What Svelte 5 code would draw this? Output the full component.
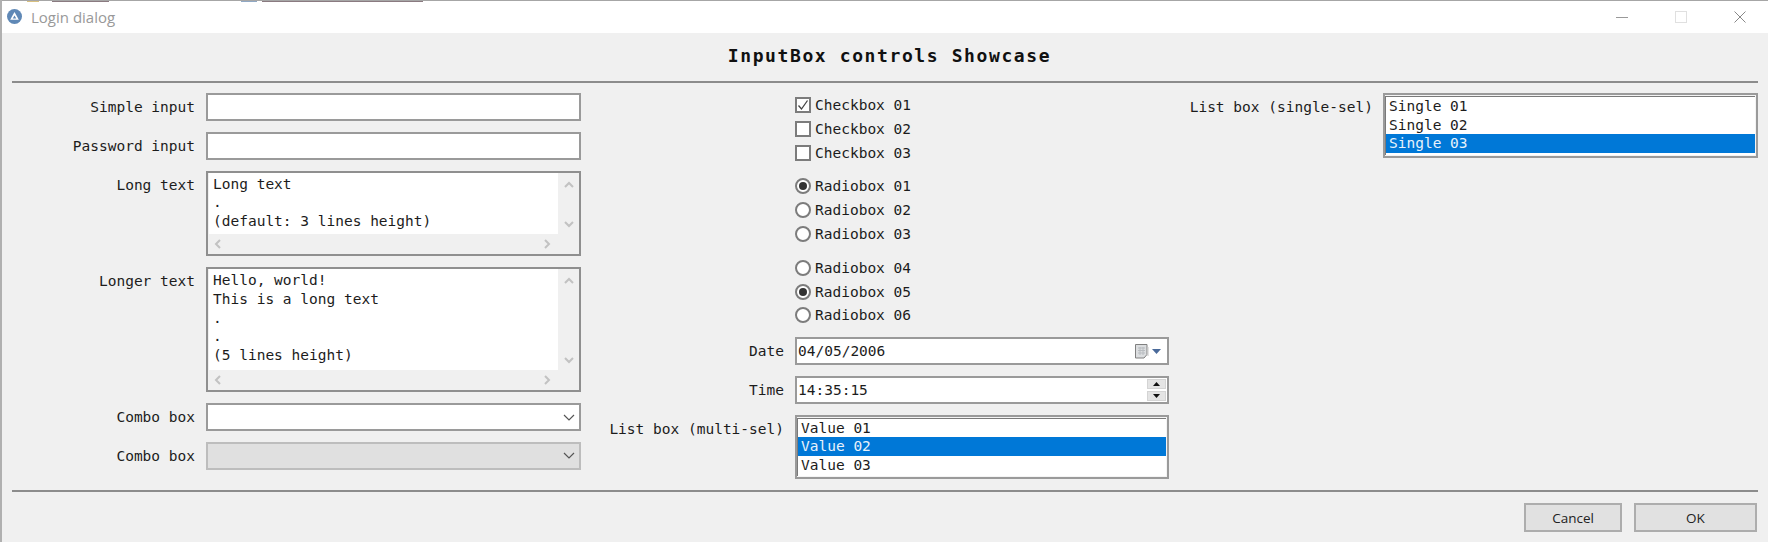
<script>
  const checks = [
    { label: 'Checkbox 01', on: true },
    { label: 'Checkbox 02', on: false },
    { label: 'Checkbox 03', on: false }
  ];
  const radioGroups = [
    [
      { label: 'Radiobox 01', on: true },
      { label: 'Radiobox 02', on: false },
      { label: 'Radiobox 03', on: false }
    ],
    [
      { label: 'Radiobox 04', on: false },
      { label: 'Radiobox 05', on: true },
      { label: 'Radiobox 06', on: false }
    ]
  ];
  const multi = ['Value 01', 'Value 02', 'Value 03'];
  const single = ['Single 01', 'Single 02', 'Single 03'];
</script>

{#snippet vscroll()}
  <div class="vbar">
    <svg width="10" height="7" viewBox="0 0 10 7"><path d="M1 6l4-4 4 4" /></svg>
    <svg width="10" height="7" viewBox="0 0 10 7"><path d="M1 1l4 4 4-4" /></svg>
  </div>
{/snippet}

{#snippet hscroll()}
  <div class="hbar">
    <svg width="7" height="10" viewBox="0 0 7 10"><path d="M6 1L2 5l4 4" /></svg>
    <svg width="7" height="10" viewBox="0 0 7 10"><path d="M1 1l4 4-4 4" /></svg>
  </div>
{/snippet}

{#snippet chevron()}
  <svg class="chev" width="12" height="7" viewBox="0 0 12 7"><path d="M1 1l5 5 5-5" /></svg>
{/snippet}

{#snippet listbox(items, selected)}
  <div class="listbox">
    <div class="listinner">
      {#each items as item, i}
        <div class="item" class:sel={i === selected}>{item}</div>
      {/each}
    </div>
  </div>
{/snippet}

<div class="window">
  <div class="strip"></div>
  <header class="titlebar">
    <svg class="appicon" width="15" height="15" viewBox="0 0 16 16">
      <circle cx="8" cy="8" r="8" fill="#5f88b6" />
      <path d="M8 3.2L12.6 11.4H3.4Z" fill="#fff" />
      <path d="M8 6.8L9.9 10H6.1Z" fill="#5f88b6" />
    </svg>
    <span class="wintitle">Login dialog</span>
    <div class="winctl">
      <svg width="12" height="12" viewBox="0 0 12 12"><path d="M0 6.5h12" stroke="#999" /></svg>
      <svg width="12" height="12" viewBox="0 0 12 12"><rect x=".5" y=".5" width="11" height="11" fill="none" stroke="#e0e0e0" /></svg>
      <svg width="12" height="12" viewBox="0 0 12 12"><path d="M.5.5l11 11M11.5.5l-11 11" stroke="#888" /></svg>
    </div>
  </header>

  <main class="body">
    <h1>InputBox controls Showcase</h1>
    <hr />

    <div class="columns">
      <div class="col first">
        <div class="row">
          <span class="lbl">Simple input</span>
          <input class="field" type="text" />
        </div>
        <div class="row">
          <span class="lbl">Password input</span>
          <input class="field" type="password" />
        </div>
        <div class="row">
          <span class="lbl">Long text</span>
          <div class="memo short">
            <div class="memotop">
              <div class="memotext">Long text<br />.<br />(default: 3 lines height)</div>
              {@render vscroll()}
            </div>
            {@render hscroll()}
          </div>
        </div>
        <div class="row">
          <span class="lbl">Longer text</span>
          <div class="memo tall">
            <div class="memotop">
              <div class="memotext">Hello, world!<br />This is a long text<br />.<br />.<br />(5 lines height)</div>
              {@render vscroll()}
            </div>
            {@render hscroll()}
          </div>
        </div>
        <div class="row">
          <span class="lbl">Combo box</span>
          <div class="field combo">{@render chevron()}</div>
        </div>
        <div class="row">
          <span class="lbl">Combo box</span>
          <div class="field combo disabled">{@render chevron()}</div>
        </div>
      </div>

      <div class="col middle">
        <div class="row opts">
          <span class="lbl"></span>
          <div class="options">
            <div class="group">
              {#each checks as c}
                <div class="opt">
                  <span class="box">
                    {#if c.on}
                      <svg width="12" height="12" viewBox="0 0 12 12"><path d="M1.5 6.5l3 3.5 6-8.5" /></svg>
                    {/if}
                  </span>
                  {c.label}
                </div>
              {/each}
            </div>
            {#each radioGroups as group}
              <div class="group">
                {#each group as r}
                  <div class="opt">
                    <span class="radio" class:on={r.on}></span>
                    {r.label}
                  </div>
                {/each}
              </div>
            {/each}
          </div>
        </div>
        <div class="row">
          <span class="lbl">Date</span>
          <div class="field valued">
            04/05/2006
            <div class="picker">
              <svg width="14" height="16" viewBox="0 0 14 16">
                <path d="M.5 1.5h11.5v10l-3 3.5H.5z" fill="#dcdee0" stroke="#808080" />
                <path d="M3 5h7M3 7.5h7M3 10h7M5 4v8M8 4v8" stroke="#b8bcc0" />
                <path d="M13 4v9" stroke="#c8c8c8" />
              </svg>
              <svg width="9" height="5" viewBox="0 0 9 5"><path d="M0 0h9L4.5 5z" fill="#4a6a9a" /></svg>
            </div>
          </div>
        </div>
        <div class="row">
          <span class="lbl">Time</span>
          <div class="field valued">
            14:35:15
            <div class="spin">
              <span class="spinbtn"><svg width="7" height="4" viewBox="0 0 7 4"><path d="M3.5 0L7 4H0z" /></svg></span>
              <span class="spinbtn"><svg width="7" height="4" viewBox="0 0 7 4"><path d="M0 0h7L3.5 4z" /></svg></span>
            </div>
          </div>
        </div>
        <div class="row">
          <span class="lbl">List box (multi-sel)</span>
          {@render listbox(multi, 1)}
        </div>
      </div>

      <div class="col last">
        <div class="row">
          <span class="lbl">List box (single-sel)</span>
          {@render listbox(single, 2)}
        </div>
      </div>
    </div>

    <hr class="bottom" />

    <footer class="actions">
      <button class="cancel">Cancel</button>
      <button class="ok">OK</button>
    </footer>
  </main>
</div>

<style>
  :global(body) {
    margin: 0;
    background: #fff;
  }

  .window {
    width: 1768px;
    height: 542px;
    box-sizing: border-box;
    border-left: 2px solid #b0b0b0;
    display: flex;
    flex-direction: column;
    overflow: hidden;
    font-family: "DejaVu Sans Mono", monospace;
    font-size: 14.5px;
    color: #1c1c1c;
  }

  /* sliver of whatever window sits behind the dialog */
  .strip {
    height: 1px;
    flex: none;
    border-top: 1px solid #a6a6a6;
    background: linear-gradient(90deg, #fff 25px, #d8c080 25px 37px, #fff 37px 50px, #8a7a80 50px 107px, #fff 107px 239px, #90a8c4 239px 255px, #fff 255px 260px, #8a7a80 260px 421px, #fff 421px);
  }

  .titlebar {
    height: 31px;
    flex: none;
    background: #fff;
    display: flex;
    align-items: center;
    padding: 0 0 2px 5px;
    box-sizing: border-box;
  }

  .appicon {
    margin-right: 9px;
  }

  .wintitle {
    font-family: "Open Sans", sans-serif;
    font-size: 15px;
    color: #999;
  }

  .winctl {
    margin-left: auto;
    display: flex;
    gap: 47px;
    padding-right: 22px;
  }

  .body {
    flex: 1;
    background: #f0f0f0;
    padding: 0 10px;
    display: flex;
    flex-direction: column;
  }

  h1 {
    margin: 0;
    height: 48px;
    line-height: 46px;
    padding-left: 9px;
    text-align: center;
    font-size: 18px;
    font-weight: bold;
    letter-spacing: 1.6px;
    color: #111;
  }

  hr {
    margin: 0;
    border: none;
    height: 2px;
    background: #8c8c8c;
    flex: none;
  }

  .columns {
    display: flex;
    height: 407px;
    padding-top: 10px;
    box-sizing: border-box;
    gap: 11px;
  }

  .col {
    flex: none;
    display: flex;
    flex-direction: column;
    gap: 10.8px;
  }

  .first {
    --label: 183px;
    width: 569px;
  }

  .middle {
    --label: 192px;
    width: 577px;
  }

  .last {
    --label: 193px;
    width: 578px;
  }

  .row {
    display: flex;
    gap: 11px;
  }

  .last .row {
    gap: 10px;
  }

  .lbl {
    width: var(--label);
    flex: none;
    text-align: right;
    line-height: 28px;
    white-space: nowrap;
  }

  .field {
    flex: 1;
    min-width: 0;
    height: 28px;
    box-sizing: border-box;
    border: 2px solid #9a9a9a;
    background: #fff;
    padding: 0;
    margin: 0;
    outline: none;
    font: inherit;
    color: inherit;
  }

  .memo {
    flex: 1;
    box-sizing: border-box;
    border: 2px solid #8f8f8f;
    background: #f0f0f0;
    padding: 0 0 0 1px;
    display: flex;
    flex-direction: column;
  }

  .short {
    height: 85.6px;
  }

  .tall {
    height: 125.4px;
  }

  .memotop {
    flex: 1;
    display: flex;
    min-height: 0;
  }

  .memotext {
    flex: 1;
    background: #fff;
    padding: 2px 0 0 4px;
    line-height: 18.8px;
  }

  .vbar {
    width: 21px;
    flex: none;
    display: flex;
    flex-direction: column;
    align-items: center;
    justify-content: space-between;
    padding: 8px 0 6px;
    box-sizing: border-box;
  }

  .hbar {
    height: 20px;
    flex: none;
    display: flex;
    align-items: center;
    justify-content: space-between;
    padding: 0 28px 0 5px;
  }

  .vbar path,
  .hbar path {
    fill: none;
    stroke: #c2c2c2;
    stroke-width: 2;
  }

  .combo {
    display: flex;
    align-items: center;
    justify-content: flex-end;
    padding-right: 4px;
  }

  .chev path {
    fill: none;
    stroke: #555;
    stroke-width: 1.2;
  }

  .disabled {
    background: #e0e0e0;
    border-color: #bdbdbd;
  }

  .options {
    display: flex;
    flex-direction: column;
    gap: 17.8px;
    padding-top: 4px;
    height: 230px;
    box-sizing: border-box;
  }

  .opts {
    margin-bottom: 3.2px;
  }

  .group {
    display: flex;
    flex-direction: column;
    gap: 7.8px;
  }

  .opt {
    display: flex;
    align-items: center;
    gap: 4px;
    height: 16px;
    line-height: 16px;
  }

  .box {
    width: 16px;
    height: 16px;
    box-sizing: border-box;
    border: 2px solid #7c7c7c;
    background: #fff;
    display: flex;
    align-items: center;
    justify-content: center;
  }

  .box path {
    fill: none;
    stroke: #444;
    stroke-width: 1.3;
  }

  .radio {
    width: 16px;
    height: 16px;
    box-sizing: border-box;
    border: 2px solid #7c7c7c;
    border-radius: 50%;
    background: #fff;
    position: relative;
  }

  .radio.on::after {
    content: '';
    position: absolute;
    inset: 2px;
    border-radius: 50%;
    background: #333;
  }

  .valued {
    display: flex;
    align-items: center;
    padding: 1px 0 0 1px;
    line-height: 24px;
  }

  .picker {
    margin-left: auto;
    display: flex;
    align-items: center;
    gap: 3px;
    padding-right: 6px;
  }

  .spin {
    margin-left: auto;
    display: flex;
    flex-direction: column;
    gap: 2px;
    padding-right: 1px;
    margin-top: -1px;
  }

  .spinbtn {
    width: 19px;
    height: 10px;
    background: #e4e4e4;
    border: 1px solid #d4d4d4;
    box-sizing: border-box;
    display: flex;
    align-items: center;
    justify-content: center;
  }

  .spinbtn path {
    fill: #111;
  }

  .listbox {
    flex: 1;
    height: 64.6px;
    box-sizing: border-box;
    border: 2px solid #9a9a9a;
    background: #f4f4f4;
    padding: 1px 1px 1px 0;
  }

  .listinner {
    height: 100%;
    box-sizing: border-box;
    background: #fff;
    border-top: 1px solid #7a7a7a;
    border-left: 1px solid #7a7a7a;
  }

  .item {
    height: 18.7px;
    line-height: 18.7px;
    padding-left: 3px;
    white-space: nowrap;
  }

  .item.sel {
    background: #0078d7;
    color: #e8f2fb;
  }

  .actions {
    display: flex;
    justify-content: flex-end;
    gap: 12px;
    padding: 11px 1px 0 0;
  }

  button {
    height: 29px;
    box-sizing: border-box;
    border: 2px solid #adadad;
    background: #e1e1e1;
    font-family: "Open Sans", sans-serif;
    font-size: 13.5px;
    color: #222;
    padding: 0;
  }

  .cancel {
    width: 98px;
  }

  .ok {
    width: 123px;
  }
</style>
